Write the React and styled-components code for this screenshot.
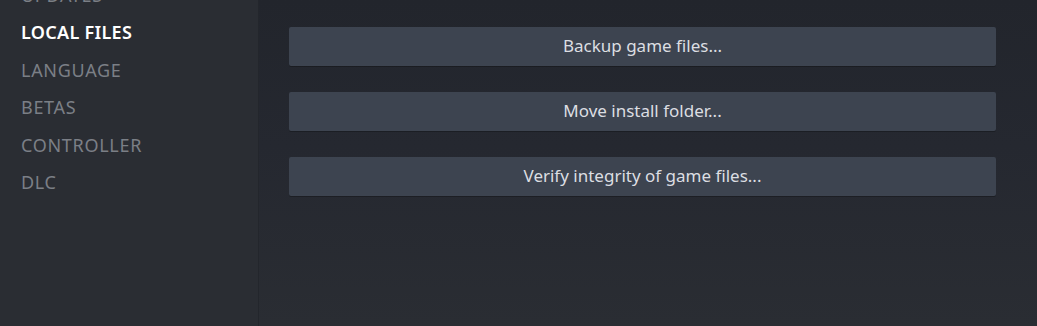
import React from "react";
import styled, { createGlobalStyle } from "styled-components";

const GlobalStyle = createGlobalStyle`
  html, body {
    margin: 0;
    padding: 0;
    background: #2a2d33;
    font-family: "Noto Sans", "Open Sans", sans-serif;
  }
`;

const Page = styled.div`
  display: flex;
  width: 1037px;
  height: 326px;
  overflow: hidden;
`;

const Sidebar = styled.nav`
  width: 258px;
  flex-shrink: 0;
  background: #2a2d33;
  display: flex;
  flex-direction: column;
  padding: 0 0 0 21px;
  margin-top: -24px;
  box-sizing: border-box;
`;

const NavItem = styled.div`
  height: 37.5px;
  display: flex;
  align-items: center;
  font-size: 18px;
  text-transform: uppercase;
  font-weight: ${(p) => (p.$active ? 600 : 400)};
  letter-spacing: ${(p) => (p.$active ? "0.3px" : "0.7px")};
  color: ${(p) => (p.$active ? "#ffffff" : "#7b7f86")};
`;

const Main = styled.main`
  flex: 1;
  background: linear-gradient(180deg, #22252c 0%, #252830 45%, #2a2d33 100%);
  border-left: 1px solid #23262c;
  padding: 27px 41px 0 30px;
  display: flex;
  flex-direction: column;
  gap: 26px;
`;

const ActionButton = styled.button`
  height: 39px;
  width: 100%;
  border: none;
  border-radius: 2px;
  background: #3d4450;
  color: #dcdee2;
  font-family: "Noto Sans", "Open Sans", sans-serif;
  font-size: 17px;
  padding: 0 0 2px;
  cursor: pointer;
  box-shadow: 0 1px 0 rgba(0, 0, 0, 0.25);
`;

const navItems = ["Updates", "Local Files", "Language", "Betas", "Controller", "DLC"];
const actions = ["Backup game files...", "Move install folder...", "Verify integrity of game files..."];

export default function App() {
  return (
    <>
      <GlobalStyle />
      <Page>
        <Sidebar>
          {navItems.map((item) => (
            <NavItem key={item} $active={item === "Local Files"}>
              {item}
            </NavItem>
          ))}
        </Sidebar>
        <Main>
          {actions.map((a) => (
            <ActionButton key={a}>{a}</ActionButton>
          ))}
        </Main>
      </Page>
    </>
  );
}
